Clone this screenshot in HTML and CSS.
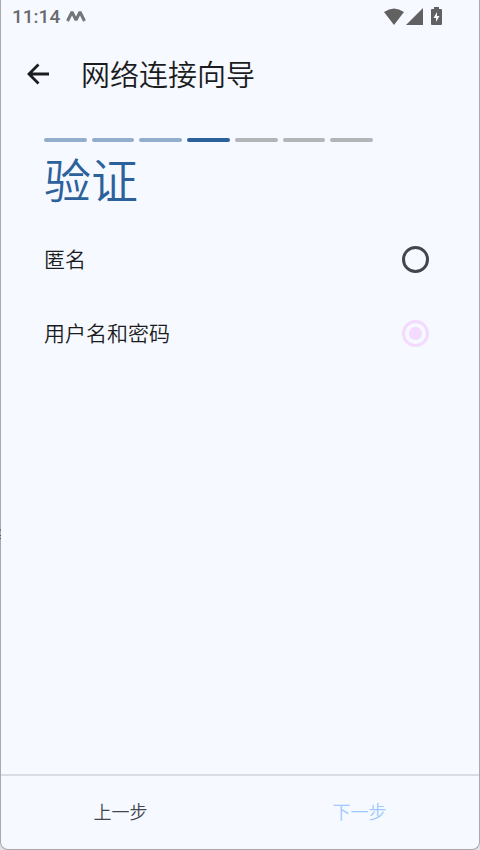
FILE: index.html
```html
<!DOCTYPE html>
<html lang="zh-CN">
<head>
<meta charset="utf-8">
<meta name="viewport" content="width=device-width, initial-scale=1">
<title>网络连接向导</title>
<link rel="stylesheet" href="styles.css">
</head>
<body>
<div class="screen">
  <div class="status-bar">
    <span class="clock">11:14</span>
    <svg class="status-app" width="20" height="12" viewBox="0 0 20 12" aria-hidden="true">
      <path d="M1.500 11 6 2l4 8 4-8 4.500 9" fill="none" stroke="#747579" stroke-width="3" stroke-linejoin="bevel"/>
    </svg>
    <div class="status-icons">
      <svg width="20" height="17" viewBox="0 0 20 17" aria-hidden="true"><path d="M0 4Q10-3 20 4L10 17Z" fill="#616161"/></svg>
      <svg width="17" height="17" viewBox="0 0 17 17" aria-hidden="true"><path d="M17 0V17H0Z" fill="#616161"/></svg>
      <svg class="battery" width="11" height="18" viewBox="0 0 11 18" aria-hidden="true">
        <path d="M3 0h5v2h2q1 0 1 1v14q0 1-1 1H1q-1 0-1-1V3q0-1 1-1h2Z" fill="#616161"/>
        <path d="M6 5 2.500 11H5v4l3.500-6H6Z" fill="#f6f9ff"/>
      </svg>
    </div>
  </div>

  <header class="app-bar">
    <button class="back" type="button" aria-label="返回">
      <svg width="24" height="22" viewBox="0 0 24 22" aria-hidden="true"><path d="M23 11H3M12.500 1.500 3 11l9.500 9.500" fill="none" stroke="#1a1c1e" stroke-width="2.800"/></svg>
    </button>
    <h1 class="title">网络连接向导</h1>
  </header>

  <main class="content">
    <div class="steps" role="progressbar" aria-label="步骤" aria-valuemin="1" aria-valuemax="7" aria-valuenow="4">
      <span class="step done"></span>
      <span class="step done"></span>
      <span class="step done"></span>
      <span class="step current"></span>
      <span class="step"></span>
      <span class="step"></span>
      <span class="step"></span>
    </div>
    <h2 class="heading">验证</h2>
    <form class="options">
      <label class="option" for="anonymous"><span class="option-text">匿名</span><input class="radio" type="radio" id="anonymous" name="auth"></label>
      <label class="option" for="password"><span class="option-text">用户名和密码</span><input class="radio" type="radio" id="password" name="auth" checked></label>
    </form>
  </main>

  <footer class="actions">
    <button class="action" type="button">上一步</button>
    <button class="action next" type="button">下一步</button>
  </footer>
</div>
</body>
</html>
```
FILE: styles.css
```css
* {
  box-sizing: border-box;
}

body {
  margin: 0;
  background: #e2e2e2;
  color: #1a1c1e;
  font-family: "Noto Sans CJK SC", sans-serif;
  font-weight: 350;
}

button {
  padding: 0;
  border: 0;
  background: none;
  color: inherit;
  font: inherit;
}

svg {
  display: block;
}

.screen {
  position: relative;
  display: flex;
  flex-direction: column;
  min-height: 100vh;
  border: 1px solid #a9a9ac;
  border-top: 0;
  border-radius: 0 0 8px 8px;
  background: #f6f9ff;
}

/* Grip marks on the window's left edge */
.screen::before {
  content: "";
  position: absolute;
  top: 529px;
  left: -1px;
  width: 1px;
  height: 10px;
  background: linear-gradient(#777 0 2px, transparent 2px 6px, #555 6px 7px, transparent 7px 9px, #555 9px);
}

.status-bar {
  display: flex;
  align-items: center;
  height: 32px;
  padding: 0 37px 0 11px;
}

.clock {
  padding-top: 2px;
  color: #6a6a6c;
  font-family: Roboto, sans-serif;
  font-size: 19px;
  font-weight: 500;
  line-height: 30px;
}

.status-app {
  margin-left: 6px;
}

.status-icons {
  display: flex;
  align-items: center;
  gap: 2px;
  margin-left: auto;
}

.battery {
  margin-left: 6px;
}

.app-bar {
  display: flex;
  align-items: center;
  gap: 31px;
  height: 84px;
  padding: 0 25px;
}

.title {
  margin: 0;
  padding-bottom: 2px;
  font-size: 29px;
  font-weight: 350;
  line-height: 40px;
}

.content {
  flex: 1;
  padding: 22px 50px 0 43px;
}

.steps {
  display: flex;
  gap: 5px;
  margin-right: 56px;
}

.step {
  flex: 1;
  height: 4px;
  border-radius: 2px;
  background: #b4b5b9;
}

.step.done {
  background: #93aecd;
}

.step.current {
  background: #2d619b;
}

.heading {
  margin: 4px 0 12px;
  color: #2d619b;
  font-size: 47px;
  font-weight: 350;
  line-height: 64px;
}

.options {
  margin: 0;
}

.option {
  display: flex;
  align-items: center;
  justify-content: space-between;
  height: 74px;
  font-size: 21px;
  line-height: 32px;
}

.option-text {
  padding-bottom: 2px;
}

.radio {
  appearance: none;
  width: 27px;
  height: 27px;
  margin: 0;
  border: 3px solid #42474e;
  border-radius: 50%;
}

.radio:checked {
  border-color: #f3daff;
  background: radial-gradient(circle, #f3daff 6px, transparent 7px);
}

.actions {
  display: flex;
  height: 75px;
  border-top: 2px solid #d9dce1;
}

.action {
  flex: 1;
  padding-bottom: 3px;
  color: #42474e;
  font-size: 18px;
  font-weight: 350;
}

.action.next {
  color: #a0caff;
}
```
